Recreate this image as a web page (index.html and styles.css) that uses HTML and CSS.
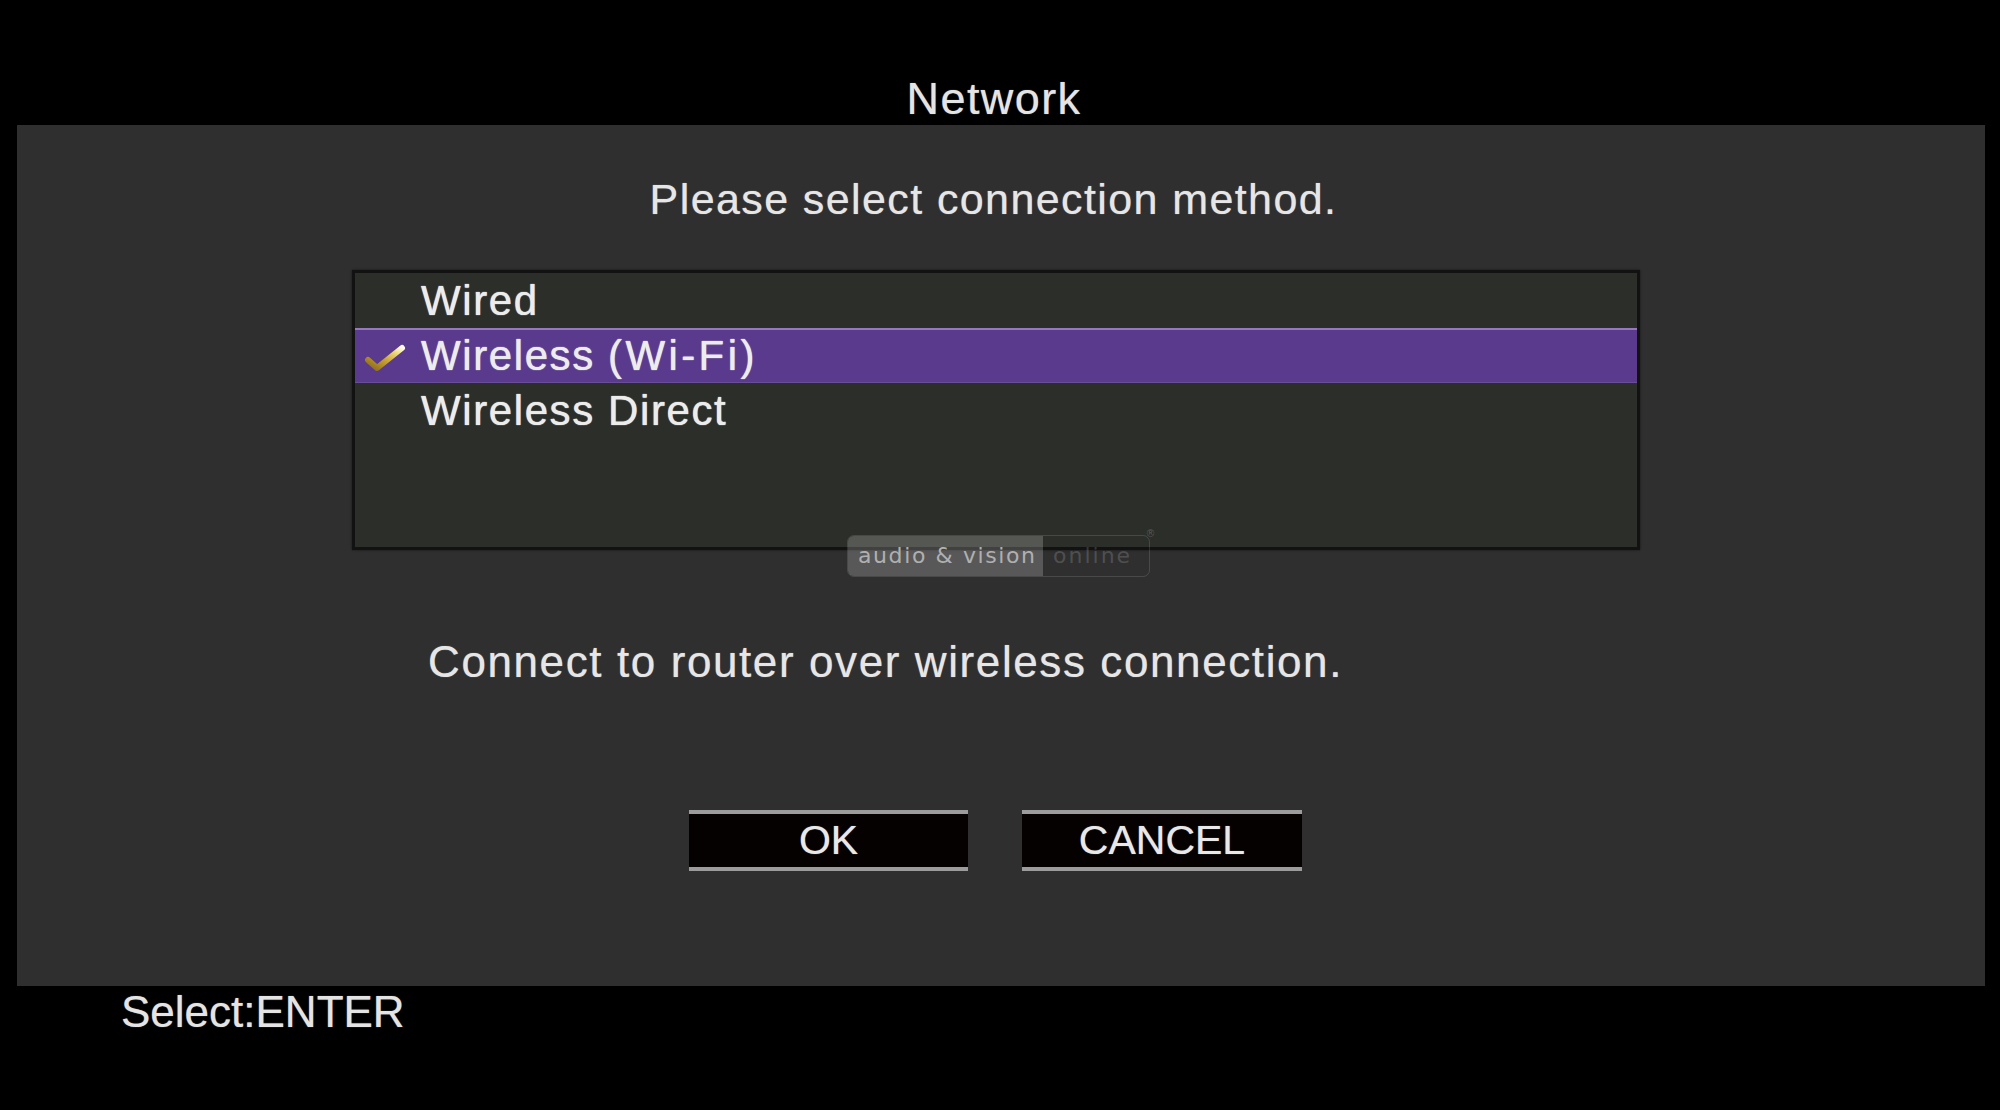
FILE: index.html
```
<!DOCTYPE html>
<html lang="en">
<head>
<meta charset="utf-8">
<title>Network</title>
<link rel="stylesheet" href="styles.css">
</head>
<body>
<div class="screen">
  <header class="title-bar"><h1 class="title">Network</h1></header>
  <main class="panel">
    <p class="prompt">Please select connection method.</p>
    <ul class="list">
      <li class="row">Wired</li>
      <li class="row selected">
        <svg class="check" width="42" height="30" viewBox="0 0 42 30">
          <defs>
            <linearGradient id="gold" x1="0" y1="1" x2="1" y2="0">
              <stop offset="0" stop-color="#8a6a18"/>
              <stop offset="0.45" stop-color="#c9a233"/>
              <stop offset="0.8" stop-color="#f0dc7a"/>
              <stop offset="1" stop-color="#fffbe8"/>
            </linearGradient>
          </defs>
          <path d="M4 17 L13 25 L38 5" fill="none" stroke="url(#gold)" stroke-width="6" stroke-linecap="round" stroke-linejoin="round"/>
        </svg>
        <span>Wireless <span class="paren">(Wi-Fi)</span></span>
      </li>
      <li class="row">Wireless Direct</li>
    </ul>
    <p class="desc">Connect to router over wireless connection.</p>
    <div class="buttons">
      <div class="btn btn-ok">OK</div>
      <div class="btn btn-cancel">CANCEL</div>
    </div>
  </main>
  <footer class="hint">Select:ENTER</footer>
  <div class="watermark">
    <span class="wm-left">audio &amp; vision</span><span class="wm-right">online</span><span class="wm-reg">®</span>
  </div>
</div>
</body>
</html>
```
FILE: styles.css
```
html, body {
  margin: 0;
  padding: 0;
  background: #000;
}
body {
  width: 2000px;
  height: 1110px;
  overflow: hidden;
  font-family: "Liberation Sans", Arial, sans-serif;
  color: #e8e8e8;
}
.screen {
  position: relative;
  width: 2000px;
  height: 1110px;
  display: flex;
  flex-direction: column;
}
.title-bar {
  box-sizing: border-box;
  height: 125px;
  padding: 77px 12px 0 0;
  text-align: center;
}
.title {
  margin: 0;
  font-weight: normal;
  font-size: 45px;
  line-height: 44px;
  letter-spacing: 1.4px;
  color: #e4e4e4;
  text-shadow: 0 0 1px rgba(255,255,255,0.6);
}
.panel {
  box-sizing: border-box;
  margin-left: 17px;
  width: 1968px;
  height: 861px;
  background: #2f2f2f;
  padding-top: 53px;
  display: flex;
  flex-direction: column;
}
.prompt {
  margin: 0;
  padding-right: 15px;
  text-align: center;
  font-size: 43px;
  line-height: 43px;
  letter-spacing: 1.4px;
  color: #e6e6e6;
  text-shadow: 0 0 1px rgba(255,255,255,0.6);
}
.list {
  box-sizing: border-box;
  list-style: none;
  margin: 49px 0 0 335px;
  padding: 0;
  width: 1288px;
  height: 280px;
  border: 3px solid #121212;
  background: #2b2e29;
  box-shadow: 0 0 2px rgba(0,0,0,0.6);
}
.row {
  box-sizing: border-box;
  height: 55px;
  display: flex;
  align-items: flex-start;
  padding-left: 66px;
  font-size: 42px;
  line-height: 55px;
  letter-spacing: 1.6px;
  color: #ececec;
  text-shadow: 0 0 1px rgba(255,255,255,0.8), 0 0 1px rgba(255,255,255,0.5);
  position: relative;
}
.paren {
  letter-spacing: 3.4px;
}
.row.selected {
  background: #5a3a8c;
  border-top: 2px solid #9678bb;
  border-bottom: 1px solid #6a4d98;
  line-height: 52px;
  height: 55px;
}
.check {
  position: absolute;
  left: 9px;
  top: 13px;
}
.desc {
  margin: 90px 0 0 411px;
  font-size: 44px;
  line-height: 44px;
  letter-spacing: 1.6px;
  color: #e6e6e6;
  text-shadow: 0 0 1px rgba(255,255,255,0.6);
}
.buttons {
  display: flex;
  gap: 54px;
  margin: 126px 0 0 672px;
}
.btn {
  box-sizing: border-box;
  height: 61px;
  border-top: 4px solid #9c9c9c;
  border-bottom: 4px solid #9c9c9c;
  background: #050101;
  text-align: center;
  font-size: 41px;
  line-height: 53px;
  color: #e8e8e8;
  text-shadow: 0 0 1px rgba(255,255,255,0.6);
}
.btn-ok { width: 279px; }
.btn-cancel { width: 280px; }
.hint {
  margin: 4px 0 0 121px;
  font-size: 44px;
  line-height: 44px;
  color: #e4e4e4;
  text-shadow: 0 0 1px rgba(255,255,255,0.6);
}
.watermark {
  position: absolute;
  left: 847px;
  top: 535px;
  width: 303px;
  height: 42px;
  box-sizing: border-box;
  border: 1px solid rgba(255,255,255,0.13);
  border-radius: 7px;
  display: flex;
  align-items: center;
  font-family: "DejaVu Sans", sans-serif;
  font-size: 22px;
  letter-spacing: 1.6px;
}
.wm-left {
  box-sizing: border-box;
  height: 40px;
  width: 195px;
  background: rgba(255,255,255,0.2);
  border-radius: 6px 0 0 6px;
  color: #b0b0b0;
  line-height: 40px;
  padding-left: 10px;
  white-space: nowrap;
}
.wm-right {
  padding-left: 10px;
  color: rgba(255,255,255,0.17);
  line-height: 40px;
  letter-spacing: 2px;
}
.wm-reg {
  position: absolute;
  right: -8px;
  top: -8px;
  font-size: 10px;
  color: rgba(255,255,255,0.2);
}
```
